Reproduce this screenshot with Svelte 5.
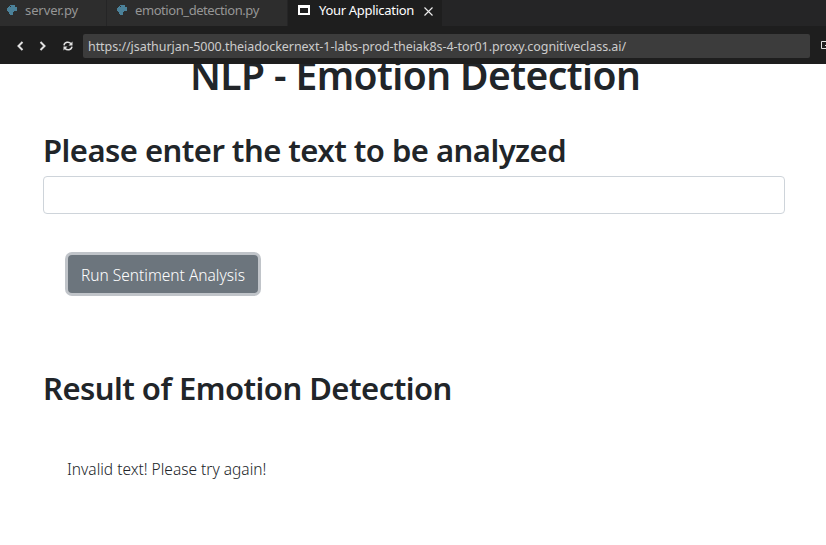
<script>
  const url = 'https://jsathurjan-5000.theiadockernext-1-labs-prod-theiak8s-4-tor01.proxy.cognitiveclass.ai/';
  let text = $state('');
</script>

{#snippet python()}
  <svg class="py" width="10" height="10" viewBox="0 0 10 10" shape-rendering="crispEdges">
    <path fill="#4b8199" d="M3 0h4l1 1v1h1l1 1v3H7l-1 1v2L5 10H3L2 9V7H1L0 6V3l1-1h1V1z" />
    <path fill="#2d2d2d" d="M3 1h1v1H3zM7 6h3v1H7zM6 7h1v2H6z" />
  </svg>
{/snippet}

<div class="window">
  <nav class="tabs">
    <div class="tab server">{@render python()}<span>server.py</span></div>
    <div class="tab emotion">{@render python()}<span>emotion_detection.py</span></div>
    <div class="tab active">
      <svg width="12" height="10" viewBox="0 0 12 10"><path fill="#fff" fill-rule="evenodd" d="M0 0h12v10H0zM2 3v5h8V3z" /></svg>
      <span>Your Application</span>
      <svg class="close" width="9" height="9" viewBox="0 0 9 9"><path d="M.5.5l8 8M8.5.5l-8 8" stroke="#eee" stroke-width="1.1" /></svg>
    </div>
  </nav>
  <div class="toolbar">
    <svg class="back" width="7" height="10" viewBox="0 0 7 10"><path d="M5.5 1L1.5 5l4 4" /></svg>
    <svg class="forward" width="7" height="10" viewBox="0 0 7 10"><path d="M1.5 1l4 4-4 4" /></svg>
    <svg class="reload" width="10" height="10" viewBox="0 0 10 10">
      <path d="M1 4.3C1.5 1 6 .2 8 2.8M9 5.7C8.500 9 4 9.800 2 7.200" style="stroke-width:1.5" />
      <path fill="#e0e0e0" stroke="none" d="M9.500 .5v4h-4zM.5 9.500v-4h4z" />
    </svg>
    <div class="address"><span>{url}</span></div>
    <svg class="open" width="9" height="10" viewBox="0 0 9 10"><path d="M9 .5H.5v7H9" style="stroke-width:1" /><path fill="#e0e0e0" stroke="none" d="M4 4h2v1H4z" /></svg>
  </div>
  <main>
    <h1><span>NLP - Emotion Detection</span></h1>
    <h2 class="prompt"><span>Please enter the text to be analyzed</span></h2>
    <input type="text" aria-label="Text to analyze" bind:value={text} />
    <button type="button"><span>Run Sentiment Analysis</span></button>
    <h2 class="result"><span>Result of Emotion Detection</span></h2>
    <p><span>Invalid text! Please try again!</span></p>
  </main>
</div>

<style>
  :global(body) { margin: 0; background: #fff; }
  * { box-sizing: border-box; }
  .window {
    width: 826px; height: 545px; overflow: hidden;
    display: flex; flex-direction: column;
    font-family: "Noto Sans", "Open Sans", sans-serif;
  }
  svg { flex: none; display: block; }
  span { white-space: nowrap; }
  .tabs { height: 26px; flex: none; display: flex; background: #252526; font-size: 13px; letter-spacing: -.3px; }
  .tab { display: flex; height: 26px; background: #2d2d2d; color: #969696; line-height: 21px; border-right: 1px solid #252526; }
  .py { margin-top: 5px; }
  .server { width: 107px; padding-left: 7px; }
  .server span { margin-left: 8px; letter-spacing: -.1px; }
  .emotion { width: 181px; padding-left: 10px; }
  .emotion span { margin-left: 8px; letter-spacing: -.43px; }
  .active { width: 154px; background: #1e1e1e; color: #fff; padding-left: 10px; border: 0; }
  .active svg { margin-top: 5px; }
  .active span { margin-left: 9px; width: 96px; }
  .active .close { margin: 7px 0 0 9px; }
  .toolbar { height: 38px; flex: none; display: flex; align-items: flex-start; background: #1e1e1e; padding: 8px 0 0 17px; }
  .toolbar svg { margin-top: 7px; fill: none; stroke: #e0e0e0; stroke-width: 2; }
  .toolbar .forward { margin-left: 15px; }
  .toolbar .reload { margin-left: 17px; }
  .address {
    width: 727px; height: 24px; flex: none; margin-left: 10px; padding-left: 5px;
    background: #3c3c3c; color: #ccc; border-radius: 2px; font-size: 12.5px; letter-spacing: -.06px; line-height: 25px;
  }
  .toolbar .open { margin-left: 11px; }
  main { flex: 1; min-height: 0; overflow: hidden; padding: 0 41px 0 43px; color: #212529; display: flex; flex-direction: column; align-items: flex-start; }
  h1, h2, p { margin: 0; flex: none; }
  h1 { font-size: 39px; line-height: 48px; font-weight: 600; letter-spacing: -.58px; margin-top: -13px; padding-left: 147px; }
  h2 { font-size: 31px; line-height: 36px; height: 38px; font-weight: 600; letter-spacing: -.53px; }
  .prompt { margin-top: 33px; }
  input { width: 742px; height: 38px; flex: none; margin: 6px 0 0; border: 1px solid #ced4da; border-radius: 4px; padding: 6px 12px; font: 16px "Noto Sans", sans-serif; outline: none; }
  button {
    width: 190px; height: 38px; flex: none; margin: 41px 0 0 25px; padding: 1px 0 0 13px; text-align: left;
    border: 0; border-radius: 4px; background: #6c757d; color: #fff; box-shadow: 0 0 0 3px #c0c4c9;
    font: 300 15.5px/38px "Noto Sans", sans-serif;
  }
  .result { margin-top: 77px; }
  p { margin: 49px 0 0 24px; font-size: 15.5px; line-height: 24px; font-weight: 300; }
</style>
